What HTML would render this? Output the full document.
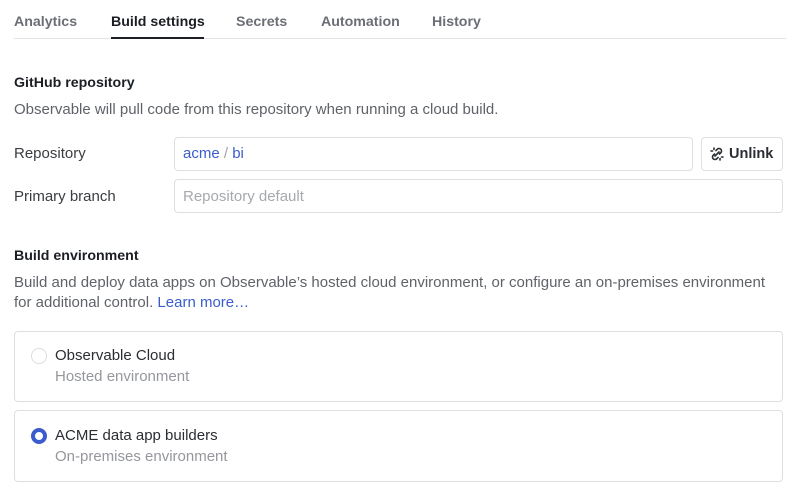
<!DOCTYPE html>
<html><head><style>
*{box-sizing:border-box;margin:0;padding:0}
body{width:791px;height:496px;background:#fff;font-family:"Liberation Sans",sans-serif;font-size:14px;color:#1b1e23;position:relative;overflow:hidden}
.a{position:absolute;white-space:nowrap}
.tab{top:14px;font-weight:bold;font-size:14.2px;color:#6b6e75}
.h{font-weight:bold;font-size:14.2px;color:#1b1e23}
.d{color:#5f6369;font-size:15px}
.box{position:absolute;border:1px solid #dedfe2;border-radius:4px}
.lbl{color:#3a3d42;font-size:15px}
</style></head><body>
<div class="a tab" style="left:14px">Analytics</div>
<div class="a tab" style="left:111px;color:#1b1e23">Build settings</div>
<div class="a tab" style="left:236px">Secrets</div>
<div class="a tab" style="left:321px">Automation</div>
<div class="a tab" style="left:432px">History</div>
<div class="a" style="left:14px;top:38px;width:772px;height:1px;background:#e3e4e6"></div>
<div class="a" style="left:111px;top:37px;width:93px;height:2px;background:#1b1e23"></div>

<div class="a h" style="left:14px;top:75px">GitHub repository</div>
<div class="a d" style="left:14px;top:101px">Observable will pull code from this repository when running a cloud build.</div>
<div class="a lbl" style="left:14px;top:145px">Repository</div>
<div class="box" style="left:174px;top:137px;width:519px;height:34px"></div>
<div class="a" style="left:183px;top:145px;color:#3b5ccc;font-size:15px">acme <span style="color:#a0a3a8">/</span> bi</div>
<div class="box" style="left:701px;top:137px;width:82px;height:34px"></div>
<svg class="a" style="left:709px;top:146px" width="16" height="16" viewBox="0 0 16 16" fill="none" stroke="#2a2d32" stroke-width="1.6" stroke-linecap="round"><path d="M6 10L10 6M7 4.5l1.5-1.5a2.5 2.5 0 013.5 3.5L10.5 8M9 11.5L7.5 13a2.5 2.5 0 01-3.5-3.5L5.5 8M2 5h1.5M5 2v1.5M14 11h-1.5M11 14v-1.5"/></svg>
<div class="a" style="left:729px;top:146px;font-weight:bold;font-size:14.5px;color:#2a2d32">Unlink</div>
<div class="a lbl" style="left:14px;top:188px">Primary branch</div>
<div class="box" style="left:174px;top:179px;width:609px;height:34px"></div>
<div class="a" style="left:183px;top:188px;color:#a6a9ae;font-size:15px">Repository default</div>

<div class="a h" style="left:14px;top:248px">Build environment</div>
<div class="a d" style="left:14px;top:274px">Build and deploy data apps on Observable’s hosted cloud environment, or configure an on-premises environment</div>
<div class="a d" style="left:14px;top:294px">for additional control. <span style="color:#3b5ccc">Learn more…</span></div>

<div class="box" style="left:14px;top:331px;width:769px;height:71px"></div>
<div class="a" style="left:31px;top:348px;width:16px;height:16px;border:1px solid #dcdde0;border-radius:50%"></div>
<div class="a lbl" style="left:55px;top:347px;color:#2a2d32">Observable Cloud</div>
<div class="a" style="left:55px;top:368px;color:#94979c;font-size:15px">Hosted environment</div>

<div class="box" style="left:14px;top:410px;width:769px;height:72px"></div>
<div class="a" style="left:31px;top:428px;width:16px;height:16px;border:4.5px solid #3b5ccc;border-radius:50%;background:#fff"></div>
<div class="a lbl" style="left:55px;top:427px;color:#2a2d32">ACME data app builders</div>
<div class="a" style="left:55px;top:448px;color:#94979c;font-size:15px">On-premises environment</div>
</body></html>
